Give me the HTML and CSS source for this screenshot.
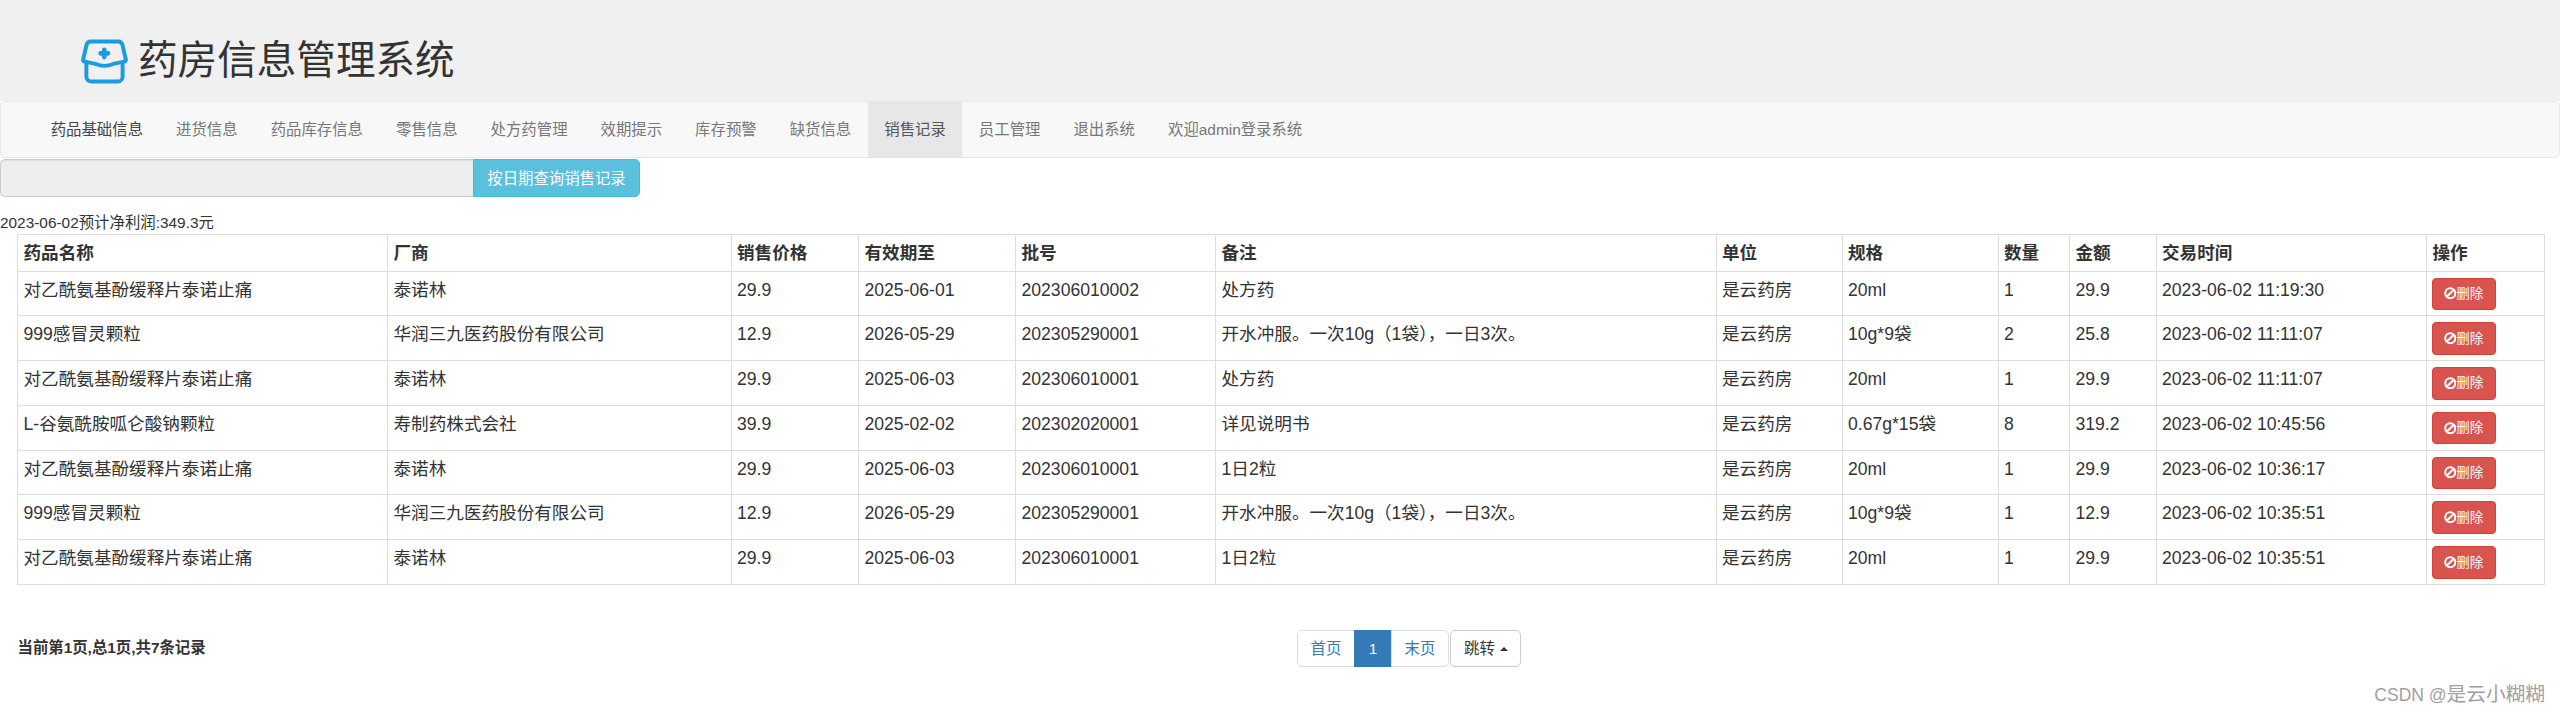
FILE: index.html
```html
<!DOCTYPE html>
<html lang="zh-CN">
<head>
<meta charset="utf-8">
<title>药房信息管理系统</title>
<link rel="stylesheet" href="styles.css">
</head>
<body>
<header class="masthead">
  <svg class="logo" viewBox="0 0 48 45" fill="none" stroke="#1b9be0" stroke-width="4" stroke-linecap="round" stroke-linejoin="round">
    <path d="M10 2H38a4.5 4.5 0 0 1 4.3 3.4L45.8 20.4c.3 1.3-.4 2-1.6 2.2L33 25q-9 4-18 0L3.800 22.600c-1.200-.2-1.900-.9-1.600-2.200L5.700 5.400A4.500 4.500 0 0 1 10 2Z"/>
    <path d="M5.500 24V38a5 5 0 0 0 5 5H37.500a5 5 0 0 0 5-5V24"/>
    <path d="M23.800 10.500v7.500M20 14.200h7.600" stroke-width="4.800"/>
  </svg>
  <h1 class="title">药房信息管理系统</h1>
</header>
<nav class="navbar">
  <a class="nav-item brand">药品基础信息</a>
  <a class="nav-item">进货信息</a>
  <a class="nav-item">药品库存信息</a>
  <a class="nav-item">零售信息</a>
  <a class="nav-item">处方药管理</a>
  <a class="nav-item">效期提示</a>
  <a class="nav-item">库存预警</a>
  <a class="nav-item">缺货信息</a>
  <a class="nav-item active">销售记录</a>
  <a class="nav-item">员工管理</a>
  <a class="nav-item">退出系统</a>
  <a class="nav-item">欢迎admin登录系统</a>
</nav>
<form class="search">
  <input class="search-input" type="text" disabled>
  <button class="search-btn" type="button">按日期查询销售记录</button>
</form>
<p class="profit">2023-06-02预计净利润:349.3元</p>
<table class="records">
  <colgroup>
    <col class="c1"><col class="c2"><col class="c3"><col class="c4"><col class="c5"><col class="c6">
    <col class="c7"><col class="c8"><col class="c9"><col class="c10"><col class="c11"><col class="c12">
  </colgroup>
  <thead>
    <tr><th>药品名称</th><th>厂商</th><th>销售价格</th><th>有效期至</th><th>批号</th><th>备注</th><th>单位</th><th>规格</th><th>数量</th><th>金额</th><th>交易时间</th><th>操作</th></tr>
  </thead>
  <tbody>
    <tr><td>对乙酰氨基酚缓释片泰诺止痛</td><td>泰诺林</td><td>29.9</td><td>2025-06-01</td><td>202306010002</td><td>处方药</td><td>是云药房</td><td>20ml</td><td>1</td><td>29.9</td><td>2023-06-02 11:19:30</td><td><button class="del" type="button"><svg class="ban" viewBox="0 0 12 12"><circle cx="6" cy="6" r="4.800"/><path d="M2.800 9.200 9.200 2.800"/></svg>删除</button></td></tr>
    <tr><td>999感冒灵颗粒</td><td>华润三九医药股份有限公司</td><td>12.9</td><td>2026-05-29</td><td>202305290001</td><td>开水冲服。一次10g（1袋），一日3次。</td><td>是云药房</td><td>10g*9袋</td><td>2</td><td>25.8</td><td>2023-06-02 11:11:07</td><td><button class="del" type="button"><svg class="ban" viewBox="0 0 12 12"><circle cx="6" cy="6" r="4.800"/><path d="M2.800 9.200 9.200 2.800"/></svg>删除</button></td></tr>
    <tr><td>对乙酰氨基酚缓释片泰诺止痛</td><td>泰诺林</td><td>29.9</td><td>2025-06-03</td><td>202306010001</td><td>处方药</td><td>是云药房</td><td>20ml</td><td>1</td><td>29.9</td><td>2023-06-02 11:11:07</td><td><button class="del" type="button"><svg class="ban" viewBox="0 0 12 12"><circle cx="6" cy="6" r="4.800"/><path d="M2.800 9.200 9.200 2.800"/></svg>删除</button></td></tr>
    <tr><td>L-谷氨酰胺呱仑酸钠颗粒</td><td>寿制药株式会社</td><td>39.9</td><td>2025-02-02</td><td>202302020001</td><td>详见说明书</td><td>是云药房</td><td>0.67g*15袋</td><td>8</td><td>319.2</td><td>2023-06-02 10:45:56</td><td><button class="del" type="button"><svg class="ban" viewBox="0 0 12 12"><circle cx="6" cy="6" r="4.800"/><path d="M2.800 9.200 9.200 2.800"/></svg>删除</button></td></tr>
    <tr><td>对乙酰氨基酚缓释片泰诺止痛</td><td>泰诺林</td><td>29.9</td><td>2025-06-03</td><td>202306010001</td><td>1日2粒</td><td>是云药房</td><td>20ml</td><td>1</td><td>29.9</td><td>2023-06-02 10:36:17</td><td><button class="del" type="button"><svg class="ban" viewBox="0 0 12 12"><circle cx="6" cy="6" r="4.800"/><path d="M2.800 9.200 9.200 2.800"/></svg>删除</button></td></tr>
    <tr><td>999感冒灵颗粒</td><td>华润三九医药股份有限公司</td><td>12.9</td><td>2026-05-29</td><td>202305290001</td><td>开水冲服。一次10g（1袋），一日3次。</td><td>是云药房</td><td>10g*9袋</td><td>1</td><td>12.9</td><td>2023-06-02 10:35:51</td><td><button class="del" type="button"><svg class="ban" viewBox="0 0 12 12"><circle cx="6" cy="6" r="4.800"/><path d="M2.800 9.200 9.200 2.800"/></svg>删除</button></td></tr>
    <tr><td>对乙酰氨基酚缓释片泰诺止痛</td><td>泰诺林</td><td>29.9</td><td>2025-06-03</td><td>202306010001</td><td>1日2粒</td><td>是云药房</td><td>20ml</td><td>1</td><td>29.9</td><td>2023-06-02 10:35:51</td><td><button class="del" type="button"><svg class="ban" viewBox="0 0 12 12"><circle cx="6" cy="6" r="4.800"/><path d="M2.800 9.200 9.200 2.800"/></svg>删除</button></td></tr>
  </tbody>
</table>
<div class="footer-row">
  <strong class="page-info">当前第1页,总1页,共7条记录</strong>
  <div class="pager-wrap">
    <ul class="pager">
      <li class="page first">首页</li>
      <li class="page current">1</li>
      <li class="page last">末页</li>
    </ul>
    <button class="jump" type="button">跳转<span class="caret"></span></button>
  </div>
</div>
<div class="watermark"><span class="wm-latin">CSDN @</span>是云小糊糊</div>
</body>
</html>
```
FILE: styles.css
```css
* { box-sizing: border-box; }
html, body { margin: 0; padding: 0; }
body {
  position: relative;
  height: 713px;
  overflow: hidden;
  background: #fff;
  color: #333;
  font-family: "Liberation Sans", "Noto Sans CJK SC", sans-serif;
  font-size: 17.6px;
  line-height: 25px;
}
.masthead {
  height: 101px;
  background: #f0f0f0;
  display: flex;
  align-items: flex-start;
  padding: 39px 0 0 81px;
  gap: 10px;
}
.logo { width: 47px; height: 45px; flex: none; }
.title {
  margin: -4px 0 0;
  font-size: 39.6px;
  line-height: 50px;
  font-weight: 400;
  color: #333;
}
.navbar {
  height: 57px;
  display: flex;
  padding: 0 0 0 33.2px;
  background: #f8f8f8;
  border: 1px solid #e7e7e7;
  border-radius: 5px;
}
.nav-item {
  padding: 0 16.5px;
  font-size: 15.4px;
  line-height: 55px;
  color: #777;
  white-space: nowrap;
}
.nav-item.brand { color: #444; }
.nav-item.active { background: #e7e7e7; color: #555; }
.search { display: flex; height: 38px; margin: 1px 0 0; }
.search-input {
  width: 473px;
  height: 38px;
  background: #eee;
  border: 1px solid #ccc;
  border-right: 0;
  border-radius: 5px 0 0 5px;
  box-shadow: inset 0 1px 1px rgba(0, 0, 0, .075);
}
.search-btn {
  width: 167px;
  height: 38px;
  padding: 0;
  background: #5bc0de;
  border: 1px solid #46b8da;
  border-radius: 0 5px 5px 0;
  color: #fff;
  font: inherit;
  font-size: 15.4px;
}
.profit {
  margin: 15px 0 0;
  height: 21.5px;
  font-size: 15.4px;
  line-height: 22px;
}
.records {
  margin: 0 0 0 17px;
  width: 2526.5px;
  table-layout: fixed;
  border-collapse: collapse;
  border-spacing: 0;
}
.c1 { width: 370px; }
.c2 { width: 343.5px; }
.c3 { width: 127.5px; }
.c4 { width: 157px; }
.c5 { width: 200px; }
.c6 { width: 500.5px; }
.c7 { width: 126px; }
.c8 { width: 156px; }
.c9 { width: 71.5px; }
.c10 { width: 86.5px; }
.c11 { width: 270.5px; }
.c12 { width: 117.5px; }
.records th, .records td {
  padding: 6px 5.5px 5px;
  border: 1px solid #ddd;
  vertical-align: top;
  text-align: left;
}
.records th { font-weight: 700; height: 37px; }
.records td { height: 44.8px; }
.records td:last-child { padding-left: 4.5px; }
.del {
  display: block;
  width: 64px;
  height: 32.5px;
  padding: 0;
  background: #d9534f;
  border: 1px solid #d43f3a;
  border-radius: 4px;
  color: #fff;
  font: inherit;
  font-size: 13.5px;
  line-height: 30px;
}
.ban {
  width: 12.5px;
  height: 12.5px;
  vertical-align: -2px;
  fill: none;
  stroke: #fff;
  stroke-width: 2;
}
.footer-row {
  display: grid;
  grid-template-columns: 1279.5px auto;
  align-items: center;
  margin-top: 44.5px;
  padding-left: 17.5px;
  font-size: 15.4px;
}
.page-info { font-size: 15.4px; margin-top: -1px; }
.pager-wrap { display: flex; gap: 1px; height: 37px; }
.pager { display: flex; list-style: none; margin: 0; padding: 0; }
.page {
  height: 37px;
  line-height: 35px;
  padding: 0 12.6px;
  border: 1px solid #ddd;
  color: #337ab7;
  font-size: 15.4px;
  margin-left: -1px;
  background: #fff;
}
.page.first { margin-left: 0; border-radius: 5px 0 0 5px; }
.page.current { padding: 0 13.7px; background: #337ab7; border-color: #337ab7; color: #fff; }
.page.last { border-radius: 0 5px 5px 0; }
.jump {
  width: 71px;
  height: 37px;
  padding: 0 0 0 1px;
  background: #fff;
  border: 1px solid #ccc;
  border-radius: 5px;
  color: #333;
  font: inherit;
  font-size: 15.4px;
}
.caret {
  display: inline-block;
  margin-left: 5px;
  vertical-align: 3px;
  border-left: 4px solid transparent;
  border-right: 4px solid transparent;
  border-bottom: 4px solid #333;
}
.watermark {
  position: absolute;
  right: 15px;
  top: 681px;
  font-size: 19.7px;
  line-height: 26px;
  color: #a0a0a0;
  white-space: nowrap;
}
.wm-latin { font-size: 17.5px; }
```
